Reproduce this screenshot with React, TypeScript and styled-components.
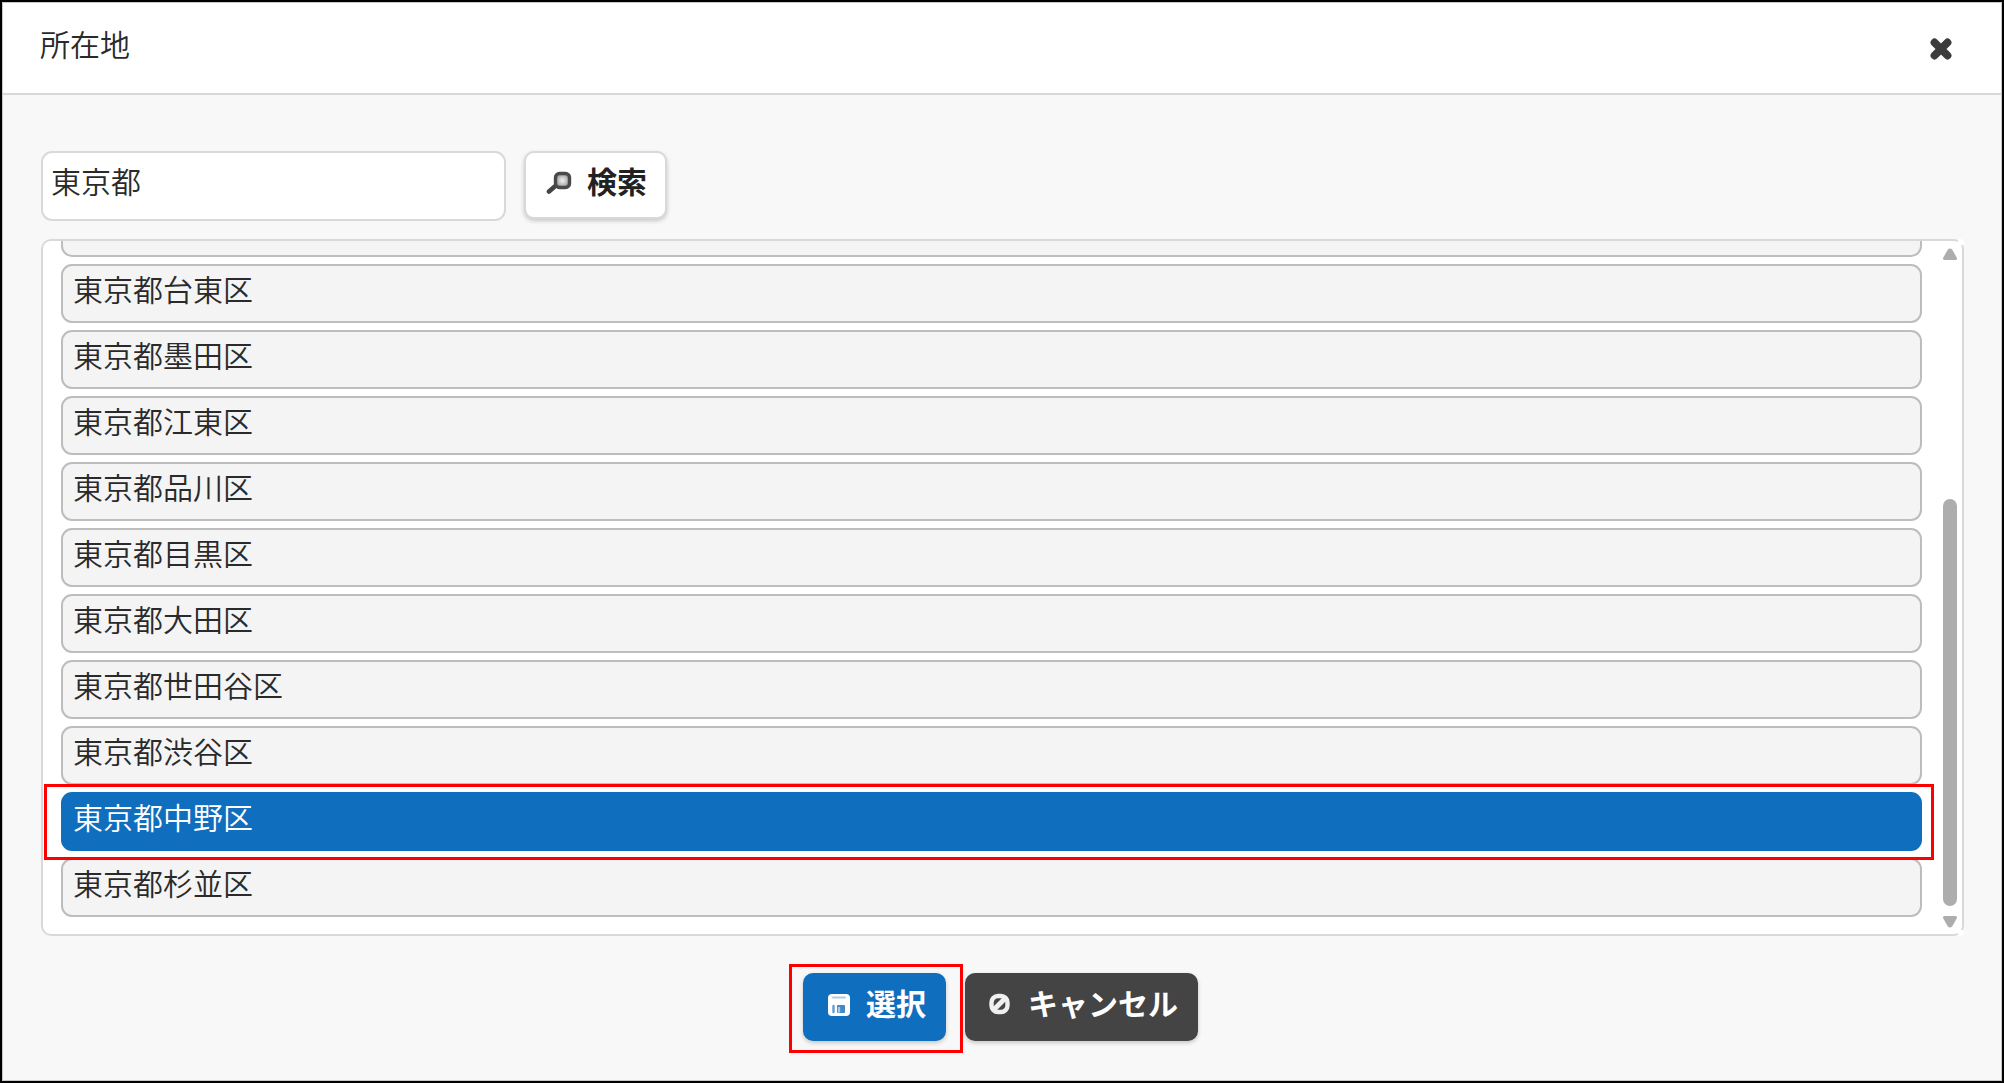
import React, { useState } from "react";
import styled, { createGlobalStyle, css } from "styled-components";

const GlobalStyle = createGlobalStyle`
  *, *::before, *::after { box-sizing: border-box; }
  body { margin: 0; background: #f8f8f8; }
  body, button, input {
    font-family: "Noto Sans CJK JP", "Noto Sans", sans-serif;
    font-size: 30px;
    font-weight: 350;
    line-height: 44px;
    color: #2a2a2a;
  }
`;

const Dialog = styled.main`
  display: flex;
  flex-direction: column;
  height: 100vh;
  min-height: 480px;
  border: 2px solid #000;
  background: #f8f8f8;
  box-shadow: inset 0 0 0 1px #c8c8c8;
`;

const Header = styled.header`
  display: flex;
  align-items: center;
  justify-content: space-between;
  margin: 1px 1px 0;
  padding: 18px 49px 28px 37px;
  border-bottom: 2px solid #d9d9d9;
  background: #fff;
`;

const Title = styled.h1`
  margin: 0;
  font-size: 30px;
  font-weight: inherit;
`;

const CloseButton = styled.button`
  display: flex;
  padding: 12px 0 0;
  border: 0;
  background: none;
  cursor: pointer;
`;

const Content = styled.div`
  display: flex;
  flex: 1;
  flex-direction: column;
  min-height: 0;
  padding: 56px 38px 40px 39px;
`;

const SearchRow = styled.form`
  display: flex;
  align-items: flex-start;
  gap: 18px;
  margin-bottom: 18px;
`;

const SearchInput = styled.input`
  width: 465px;
  height: 70px;
  padding: 0 8px 12px;
  border: 2px solid #d9d9d9;
  border-radius: 11px;
  background: #fff;
  outline: 0;
`;

const variants = {
  plain: css`
    border-color: #d9d9d9;
    background: #fff;
    color: #222;
  `,
  primary: css`
    border-color: #106ebe;
    background: #106ebe;
    color: #fff;
  `,
  dark: css`
    border-color: #444;
    background: #444;
    color: #fff;
  `,
};

const Button = styled.button<{ $variant: keyof typeof variants }>`
  display: flex;
  align-items: center;
  gap: 15px;
  height: 68px;
  padding: 0 18px 10px 20px;
  border: 2px solid;
  border-radius: 10px;
  box-shadow: 0 2px 4px rgba(0, 0, 0, 0.2);
  font-weight: 700;
  white-space: nowrap;
  cursor: pointer;
  ${(p) => variants[p.$variant]}

  svg { margin-top: 5px; }
`;

const ListBox = styled.div`
  position: relative;
  display: flex;
  flex: 1;
  min-height: 0;
  border: 2px solid #d9d9d9;
  border-radius: 10px;
  background: #fff;

  &::before,
  &::after {
    content: "";
    position: absolute;
    right: -2px;
    width: 6px;
    height: 6px;
    background: #fff;
  }
  &::before { top: -2px; border-top-right-radius: 4px; }
  &::after { bottom: -2px; border-bottom-right-radius: 4px; }
`;

const Options = styled.ul`
  display: flex;
  flex: 1;
  flex-direction: column;
  justify-content: flex-end;
  gap: 7px;
  margin: 0;
  padding: 0 12px 17px 18px;
  overflow: hidden;
  list-style: none;
`;

const Option = styled.li<{ $selected: boolean }>`
  position: relative;
  flex: none;
  z-index: ${(p) => (p.$selected ? 1 : 0)};
  height: 59px;
  padding: 0 10px;
  border: 2px solid ${(p) => (p.$selected ? "#106ebe" : "#bdbdbd")};
  border-radius: 11px;
  background: ${(p) => (p.$selected ? "#106ebe" : "#f4f4f4")};
  color: ${(p) => (p.$selected ? "#fff" : "inherit")};
  cursor: pointer;
`;

const Marker = styled.span`
  position: absolute;
  border: 3px solid #f00;
  pointer-events: none;
`;

const OptionMarker = styled(Marker)`
  inset: -10px -14px -11px -19px;
`;

const ButtonMarker = styled(Marker)`
  inset: -9px -17px -12px -14px;
`;

const ScrollBar = styled.div`
  display: flex;
  flex: none;
  flex-direction: column;
  align-items: center;
  width: 28px;
  padding: 7px 5px 6px 9px;
`;

const Track = styled.div`
  display: flex;
  flex: 1;
  flex-direction: column;
  justify-content: flex-end;
  padding: 10px 0;
`;

const Thumb = styled.div`
  width: 14px;
  height: 64%;
  border-radius: 7px;
  background: #adadad;
`;

const Footer = styled.footer`
  display: flex;
  justify-content: center;
  gap: 19px;
  margin-top: 37px;
  padding-right: 4px;
`;

const Marked = styled.div`
  position: relative;
`;

const CloseIcon = () => (
  <svg width="22" height="22" viewBox="0 0 22 22" aria-hidden="true">
    <path d="M4.5 4.5 17.5 17.5M17.5 4.5 4.5 17.5" stroke="#3c3c3c" strokeWidth="7.8" strokeLinecap="round" />
  </svg>
);

const SearchIcon = () => (
  <svg width="26" height="24" viewBox="0 0 26 24" fill="none" aria-hidden="true">
    <defs>
      <radialGradient id="lens">
        <stop offset="0.2" stopColor="#e2e2e2" />
        <stop offset="1" stopColor="#999" />
      </radialGradient>
    </defs>
    <path d="M3 20.5 10.5 14" stroke="#444" strokeWidth="4.6" strokeLinecap="round" />
    <rect x="9.5" y="2.5" width="14" height="14" rx="4" fill="url(#lens)" stroke="#4a4a4a" strokeWidth="3.4" />
  </svg>
);

const SaveIcon = () => (
  <svg width="26" height="24" viewBox="0 0 26 24" aria-hidden="true">
    <rect x="3" y="1" width="22" height="22" rx="4" fill="#fff" />
    <path d="M8 4.5H20" stroke="#a9cbe8" strokeWidth="2" strokeLinecap="round" />
    <path d="M8.5 13V19" stroke="#5f9dd3" strokeWidth="2.4" strokeLinecap="round" />
    <rect x="12" y="12" width="8" height="8" rx="1" fill="#3f89c9" />
    <path d="M14 15V18.5" stroke="#a9cbe8" strokeWidth="2.4" strokeLinecap="round" />
  </svg>
);

const CancelIcon = () => (
  <svg width="26" height="24" viewBox="0 0 26 24" fill="none" stroke="#f0f0f0" aria-hidden="true">
    <rect x="4.5" y="3" width="16" height="16" rx="6.5" strokeWidth="4.4" />
    <path d="M7.5 16 17.5 6" strokeWidth="5" />
  </svg>
);

const Arrow = ({ down = false }: { down?: boolean }) => (
  <svg width="14" height="12" viewBox="0 0 14 12" aria-hidden="true">
    <path
      d={down ? "M1.5 1.5H12.5L8 9.5Q7 10.5 6 9.5Z" : "M1.5 10.5H12.5L8 2.5Q7 1.5 6 2.5Z"}
      fill="#adadad"
      stroke="#adadad"
      strokeWidth="3"
      strokeLinejoin="round"
    />
  </svg>
);

const wards = [
  "",
  "東京都台東区",
  "東京都墨田区",
  "東京都江東区",
  "東京都品川区",
  "東京都目黒区",
  "東京都大田区",
  "東京都世田谷区",
  "東京都渋谷区",
  "東京都中野区",
  "東京都杉並区",
];

export default function App() {
  const [query, setQuery] = useState("東京都");
  const [selected, setSelected] = useState("東京都中野区");

  return (
    <>
      <GlobalStyle />
      <Dialog>
        <Header>
          <Title>所在地</Title>
          <CloseButton type="button" aria-label="閉じる">
            <CloseIcon />
          </CloseButton>
        </Header>
        <Content>
          <SearchRow onSubmit={(e) => e.preventDefault()}>
            <SearchInput
              type="text"
              aria-label="所在地"
              value={query}
              onChange={(e) => setQuery(e.target.value)}
            />
            <Button type="submit" $variant="plain">
              <SearchIcon />
              検索
            </Button>
          </SearchRow>
          <ListBox>
            <Options role="listbox" aria-label="所在地">
              {wards.map((ward) => (
                <Option
                  key={ward}
                  role="option"
                  aria-selected={ward === selected}
                  $selected={ward === selected}
                  onClick={() => setSelected(ward)}
                >
                  {ward}
                  {ward === selected && <OptionMarker />}
                </Option>
              ))}
            </Options>
            <ScrollBar aria-hidden="true">
              <Arrow />
              <Track>
                <Thumb />
              </Track>
              <Arrow down />
            </ScrollBar>
          </ListBox>
          <Footer>
            <Marked>
              <Button type="button" $variant="primary">
                <SaveIcon />
                選択
              </Button>
              <ButtonMarker />
            </Marked>
            <Button type="button" $variant="dark">
              <CancelIcon />
              キャンセル
            </Button>
          </Footer>
        </Content>
      </Dialog>
    </>
  );
}
